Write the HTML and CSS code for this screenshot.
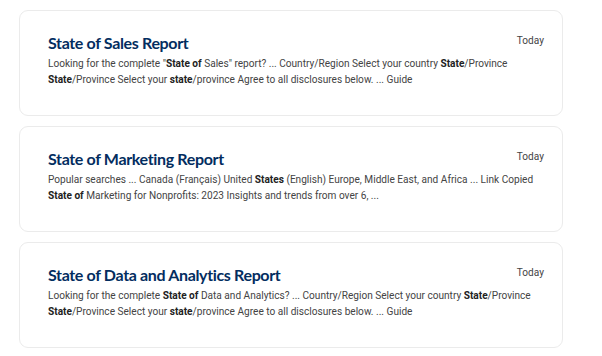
FILE: index.html
```html
<!DOCTYPE html>
<html>
<head>
<meta charset="utf-8">
<link rel="stylesheet" href="styles.css">
</head>
<body>
<div class="list">
  <div class="card">
    <div class="head">
      <h2 class="title">State of Sales Report</h2>
      <span class="date">Today</span>
    </div>
    <p class="snippet">Looking for the complete "<b>State of</b> Sales" report? ... Country/Region Select your country <b>State</b>/Province<br><b>State</b>/Province Select your <b>state</b>/province Agree to all disclosures below. ... Guide</p>
  </div>
  <div class="card">
    <div class="head">
      <h2 class="title">State of Marketing Report</h2>
      <span class="date">Today</span>
    </div>
    <p class="snippet">Popular searches ... Canada (Français) United <b>States</b> (English) Europe, Middle East, and Africa ... Link Copied<br><b>State of</b> Marketing for Nonprofits: 2023 Insights and trends from over 6, ...</p>
  </div>
  <div class="card">
    <div class="head">
      <h2 class="title">State of Data and Analytics Report</h2>
      <span class="date">Today</span>
    </div>
    <p class="snippet">Looking for the complete <b>State of</b> Data and Analytics? ... Country/Region Select your country <b>State</b>/Province<br><b>State</b>/Province Select your <b>state</b>/province Agree to all disclosures below. ... Guide</p>
  </div>
</div>
</body>
</html>
```
FILE: styles.css
```css
html, body {
  margin: 0;
  padding: 0;
  background: #ffffff;
}
.list {
  display: flex;
  flex-direction: column;
  gap: 10px;
  padding: 10px 39px 0 19px;
}
.card {
  border: 1px solid #ebebeb;
  border-radius: 9px;
  box-sizing: border-box;
  height: 106px;
  padding: 22px 18px 0 28px;
}
.head {
  display: flex;
  justify-content: space-between;
  align-items: flex-start;
}
.title {
  margin: 0;
  font-family: Lato, sans-serif;
  font-weight: 700;
  font-size: 16px;
  letter-spacing: -0.35px;
  line-height: 20px;
  color: #032d60;
}
.date {
  font-family: Roboto, sans-serif;
  font-size: 10.1px;
  line-height: 14px;
  color: #444;
  margin-top: 1px;
}
.snippet {
  margin: 3px 0 0 0;
  font-family: Roboto, sans-serif;
  font-size: 10.1px;
  line-height: 15.5px;
  color: #444;
  white-space: nowrap;
}
.snippet b {
  color: #222;
  font-weight: 700;
}
```
